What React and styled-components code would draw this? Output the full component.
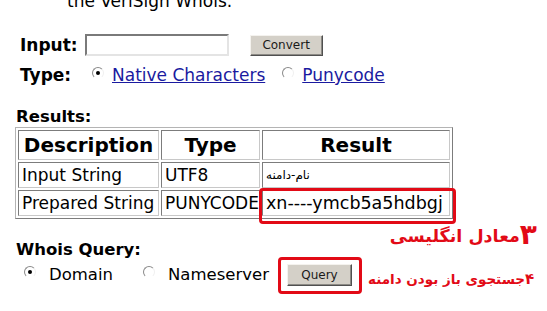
import styled, { createGlobalStyle } from 'styled-components';

const GlobalStyle = createGlobalStyle`
    body {
        margin: 0;
        background: #fff;
        font-family: "DejaVu Sans", Verdana, sans-serif;
        color: #000;
        overflow: hidden;
    }
`;

const rows = [
    { description: 'Input String', type: 'UTF8', result: 'نام-دامنه', small: true },
    { description: 'Prepared String', type: 'PUNYCODE', result: 'xn----ymcb5a5hdbgj', marked: true },
];

export default function App() {
    return (
        <>
            <GlobalStyle />
            <Page>
                <TopNote>the VeriSign Whois.</TopNote>

                <FormRow>
                    <Label>Input:</Label>
                    <TextInput type="text" />
                    <ClassicButton $width={73}>Convert</ClassicButton>
                </FormRow>

                <TypeRow>
                    <TypeLabel>Type:</TypeLabel>
                    <Radio $checked />
                    <Link href="#">Native Characters</Link>
                    <Radio $gap={17} />
                    <Link href="#">Punycode</Link>
                </TypeRow>

                <SectionTitle>Results:</SectionTitle>
                <ResultTable>
                    <colgroup>
                        <col style={{ width: 141 }} />
                        <col style={{ width: 98 }} />
                        <col style={{ width: 188 }} />
                    </colgroup>
                    <thead>
                        <HeadRow>
                            <HeadCell>Description</HeadCell>
                            <HeadCell>Type</HeadCell>
                            <HeadCell>Result</HeadCell>
                        </HeadRow>
                    </thead>
                    <tbody>
                        {rows.map((row) => (
                            <BodyRow key={row.description}>
                                <Cell>{row.description}</Cell>
                                <Cell>{row.type}</Cell>
                                <Cell $small={row.small} $marked={row.marked}>
                                    {row.result}
                                    {row.marked && (
                                        <>
                                            <RedFrame $top={-3} $right={-7} $bottom={-9} $left={-4} />
                                            <RedNote $pos="result">
                                                <Digit>۳</Digit>معادل انگلیسی
                                            </RedNote>
                                        </>
                                    )}
                                </Cell>
                            </BodyRow>
                        ))}
                    </tbody>
                </ResultTable>

                <WhoisTitle>Whois Query:</WhoisTitle>
                <QueryRow>
                    <Radio $checked $gap={8} $after={13} />
                    <Option>Domain</Option>
                    <Radio $gap={30} $after={13} />
                    <Option>Nameserver</Option>
                    <QueryWrap>
                        <ClassicButton $width={65} $height={22}>Query</ClassicButton>
                        <RedFrame $top={-7} $right={-10} $bottom={-8} $left={-9} />
                        <RedNote $pos="query">
                            <SmallDigit>۴</SmallDigit>جستجوی باز بودن دامنه
                        </RedNote>
                    </QueryWrap>
                </QueryRow>
            </Page>
        </>
    );
}

const Page = styled.main`
    width: 547px;
    height: 311px;
    padding-left: 16px;
    box-sizing: border-box;
`;

const TopNote = styled.div`
    margin-top: -9px;
    padding-left: 51px;
    height: 20px;
    line-height: 20px;
    font-size: 17px;
`;

const FormRow = styled.div`
    display: flex;
    align-items: center;
    height: 24px;
    margin-top: 22px;
    padding-left: 4px;
`;

const Label = styled.span`
    font-size: 17px;
    font-weight: bold;
    margin-right: 7px;
`;

const TextInput = styled.input`
    width: 144px;
    height: 22px;
    box-sizing: border-box;
    margin: 0 21px 0 0;
    padding: 0;
    background: #fff;
    border: 2px solid;
    border-color: #7a7a7a #e4e4e4 #e4e4e4 #7a7a7a;
    outline: none;
`;

const ClassicButton = styled.button`
    width: ${(p) => p.$width}px;
    height: ${(p) => p.$height || 21}px;
    box-sizing: border-box;
    padding: 0;
    background: #d4d0c8;
    border: 1px solid;
    border-color: #f4f2ee #505050 #505050 #f4f2ee;
    box-shadow: inset -1px -1px 0 #8c8a85;
    font-family: "DejaVu Sans", Tahoma, sans-serif;
    font-size: 12px;
    color: #1a1a1a;
`;

const TypeRow = styled.div`
    display: flex;
    align-items: center;
    height: 24px;
    margin-top: 6px;
    padding-left: 4px;
`;

const TypeLabel = styled.span`
    width: 72px;
    font-size: 17px;
    font-weight: bold;
`;

const Radio = styled.span`
    position: relative;
    width: 12px;
    height: 12px;
    box-sizing: border-box;
    margin-left: ${(p) => p.$gap || 0}px;
    margin-right: ${(p) => p.$after || 8}px;
    margin-top: -4px;
    flex: none;
    border-radius: 50%;
    border: 1px solid;
    border-color: #8a8a8a #f0f0f0 #ffffff #8a8a8a;
    background: #fff;
    &::after {
        content: '';
        display: ${(p) => (p.$checked ? 'block' : 'none')};
        position: absolute;
        left: 3px;
        top: 3px;
        width: 4px;
        height: 4px;
        border-radius: 50%;
        background: #000;
    }
`;

const Link = styled.a`
    font-size: 17px;
    color: #1a1aa0;
    text-decoration: underline;
`;

const SectionTitle = styled.div`
    margin-top: 20px;
    height: 20px;
    line-height: 20px;
    font-size: 16.5px;
    font-weight: bold;
`;

const ResultTable = styled.table`
    margin-left: -1px;
    border-collapse: separate;
    border-spacing: 2px;
    border: 1px solid;
    border-color: #b4b4b4 #7c7c7c #7c7c7c #b4b4b4;
    table-layout: fixed;
`;

const HeadRow = styled.tr`
    height: 30px;
`;

const BodyRow = styled.tr`
    height: 26px;
`;

const HeadCell = styled.th`
    padding: 0;
    border: 1px solid;
    border-color: #7c7c7c #c8c8c8 #c8c8c8 #7c7c7c;
    font-size: 20px;
    font-weight: bold;
    text-align: center;
    line-height: 26px;
`;

const Cell = styled.td`
    position: relative;
    padding: 0 0 0 3px;
    border: 1px solid;
    border-color: #7c7c7c #c8c8c8 #c8c8c8 #7c7c7c;
    font-size: ${(p) => (p.$small ? '12px' : p.$marked ? '17.5px' : '17px')};
    line-height: 22px;
    white-space: nowrap;
`;

const RedFrame = styled.span`
    position: absolute;
    top: ${(p) => p.$top}px;
    right: ${(p) => p.$right}px;
    bottom: ${(p) => p.$bottom}px;
    left: ${(p) => p.$left}px;
    border: 3px solid #e20a16;
    border-radius: 4px;
    pointer-events: none;
`;

const RedNote = styled.span`
    position: absolute;
    direction: rtl;
    white-space: nowrap;
    color: #e20a16;
    font-weight: bold;
    line-height: 20px;
    ${(p) =>
        p.$pos === 'result'
            ? `top: calc(100% + 10px); right: -88px; font-size: 17.5px;`
            : `top: 5px; left: calc(100% + 16px); font-size: 13.5px;`}
`;

const Digit = styled.span`
    font-size: 28px;
    vertical-align: -2px;
`;

const SmallDigit = styled.span`
    font-size: 15px;
`;

const WhoisTitle = styled.div`
    margin-top: 21px;
    height: 20px;
    line-height: 20px;
    font-size: 16.5px;
    font-weight: bold;
`;

const QueryRow = styled.div`
    display: flex;
    align-items: center;
    height: 22px;
    margin-top: 3px;
`;

const Option = styled.span`
    font-size: 16.5px;
`;

const QueryWrap = styled.span`
    position: relative;
    display: inline-flex;
    margin-left: 18px;
    margin-top: 2px;
`;
